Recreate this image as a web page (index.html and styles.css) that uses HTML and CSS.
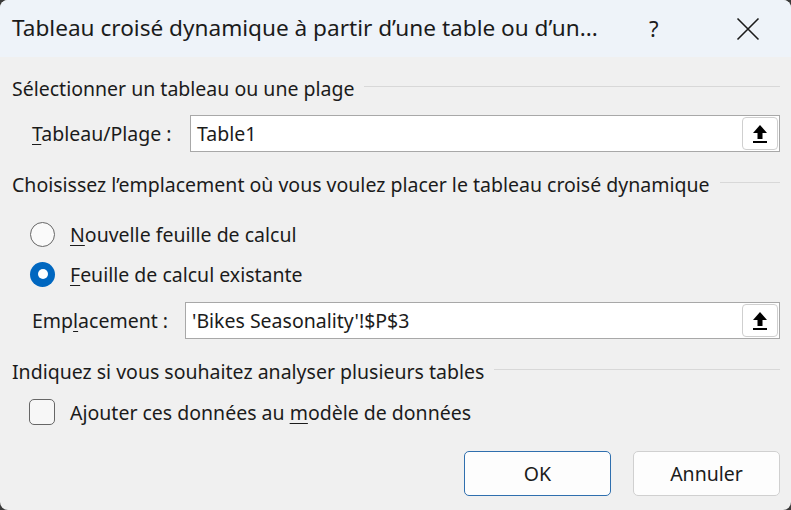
FILE: index.html
```html
<!DOCTYPE html>
<html lang="fr">
<head>
<meta charset="utf-8">
<link rel="stylesheet" href="styles.css">
</head>
<body>
<div class="dialog">
  <div class="titlebar">
    <div class="title">Tableau croisé dynamique à partir d’une table ou d’un...</div>
    <div class="help">?</div>
    <div class="close">
      <svg width="24" height="24" viewBox="0 0 24 24"><path d="M1.5 1.5 L22.5 22.5 M22.5 1.5 L1.5 22.5" stroke="#1b1b1b" stroke-width="1.6" fill="none"/></svg>
    </div>
  </div>
  <div class="content">
    <div class="group-head h1"><span>Sélectionner un tableau ou une plage</span><div class="rule"></div></div>
    <div class="field-row r1">
      <div class="label"><u>T</u>ableau/Plage :</div>
      <div class="input in1">
        <span class="val">Table1</span>
        <div class="pick"><svg width="18" height="20" viewBox="0 0 18 20"><path d="M9 1 L16 9 L11.5 9 L11.5 15 L6.5 15 L6.5 9 L2 9 Z" fill="#000"/><rect x="2" y="17" width="14" height="2" fill="#000"/></svg></div>
      </div>
    </div>
    <div class="group-head h2"><span>Choisissez l’emplacement où vous voulez placer le tableau croisé dynamique</span><div class="rule"></div></div>
    <div class="opt r-radio1"><div class="radio"></div><span><u>N</u>ouvelle feuille de calcul</span></div>
    <div class="opt r-radio2"><div class="radio on"></div><span><u>F</u>euille de calcul existante</span></div>
    <div class="field-row r2">
      <div class="label lab2">Emp<u>l</u>acement :</div>
      <div class="input in2">
        <span class="val">'Bikes Seasonality'!$P$3</span>
        <div class="pick"><svg width="18" height="20" viewBox="0 0 18 20"><path d="M9 1 L16 9 L11.5 9 L11.5 15 L6.5 15 L6.5 9 L2 9 Z" fill="#000"/><rect x="2" y="17" width="14" height="2" fill="#000"/></svg></div>
      </div>
    </div>
    <div class="group-head h3"><span>Indiquez si vous souhaitez analyser plusieurs tables</span><div class="rule"></div></div>
    <div class="opt r-check"><div class="check"></div><span>Ajouter ces données au <u>m</u>odèle de données</span></div>
    <div class="buttons">
      <button class="btn ok">OK</button>
      <button class="btn">Annuler</button>
    </div>
  </div>
</div>
</body>
</html>
```
FILE: styles.css
```css
* { box-sizing: border-box; }
html, body { margin: 0; padding: 0; background: #3a3a3a; }
body { width: 791px; height: 510px; overflow: hidden; font-family: "Segoe UI", "Noto Sans", "Open Sans", sans-serif; color: #1b1b1b; }
.dialog { width: 791px; height: 510px; background: #f0f0f0; border-radius: 8px; overflow: hidden; display: flex; flex-direction: column; }
.titlebar { height: 57px; background: #eef3f9; display: flex; align-items: center; padding-left: 12px; }
.title { font-size: 22.6px; flex: 1; white-space: nowrap; padding-bottom: 2px; }
.help { font-size: 22px; width: 24px; margin-right: 63px; padding-bottom: 2px; }
.close { width: 24px; margin-right: 31px; display: flex; align-items: center; }
.content { display: flex; flex-direction: column; padding: 0 11px 0 12px; }
.group-head { display: flex; align-items: center; height: 30px; font-size: 19.5px; }
.group-head .rule { flex: 1; height: 1px; background: #d8d8d8; margin-left: 10px; margin-top: -3px; }
.h1 { margin-top: 16px; }
.field-row { display: flex; align-items: center; height: 37px; font-size: 19.5px; }
.r1 { margin-top: 12px; }
.label { padding-left: 20px; width: 178px; }
.lab2 { width: 173px; }
.input { flex: 1; height: 37px; background: #fff; border: 1px solid #a8a8a8; display: flex; align-items: center; padding-left: 6px; }
.input .val { flex: 1; font-size: 19.5px; }
.pick { width: 36px; height: 33px; border: 1px solid #cfcfcf; border-radius: 4px; background: #fff; display: flex; align-items: center; justify-content: center; margin-right: 1px; }
.h2 { margin-top: 17px; }
.opt { display: flex; align-items: center; height: 40px; font-size: 19.5px; }
.r-radio1 { margin-top: 15px; }
.radio { width: 25px; height: 25px; border-radius: 50%; border: 1.5px solid #666; background: #fafafa; margin-left: 18px; margin-right: 15px; }
.radio.on { border: none; background: #0067c0; display: flex; align-items: center; justify-content: center; }
.radio.on::after { content: ""; width: 10px; height: 10px; border-radius: 50%; background: #fff; }
.r2 { margin-top: 8px; }
.h3 { margin-top: 17px; }
.r-check { margin-top: 6px; }
.check { width: 26px; height: 26px; border: 1.5px solid #666; border-radius: 5px; background: #f7f7f7; margin-left: 17px; margin-right: 15px; }
.buttons { display: flex; justify-content: flex-end; gap: 22px; margin-top: 19px; }
.btn { width: 147px; height: 45px; background: #fdfdfd; border: 1px solid #d0d0d0; border-radius: 5px; font-family: inherit; font-size: 19.5px; color: #1b1b1b; padding: 0; }
.btn.ok { border: 1px solid #2f6fae; }
u { text-decoration-thickness: 1px; text-underline-offset: 3px; }
```
